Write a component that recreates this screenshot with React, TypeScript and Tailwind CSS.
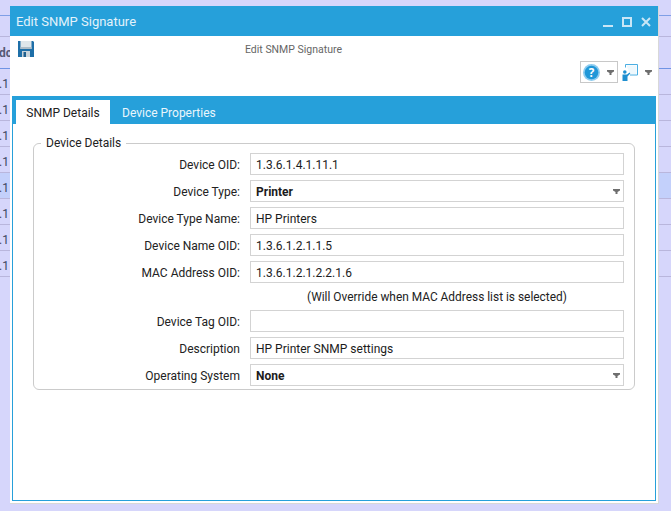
import React from 'react';

const font = 'font-[family-name:Roboto,sans-serif]';

const bgRows = [
  { h: 'h-[16px]', line: 'border-[#7f9fe6]' },
  { h: 'h-[21px]', line: 'border-[#b9b6dc]' },
  { h: 'h-[32px]', line: 'border-[#6f94e4]', text: 'dc', bold: true },
  { h: 'h-[26px]', line: 'border-[#b9b6dc]', text: '.1' },
  { h: 'h-[26px]', line: 'border-[#b9b6dc]', text: '.1' },
  { h: 'h-[26px]', line: 'border-[#b9b6dc]', text: '.1' },
  { h: 'h-[26px]', line: 'border-[#b9b6dc]', text: '.1' },
  { h: 'h-[26px]', line: 'border-[#b9b6dc]', text: '.1', active: true },
  { h: 'h-[26px]', line: 'border-[#b9b6dc]', text: '.1' },
  { h: 'h-[26px]', line: 'border-[#b9b6dc]', text: '.1' },
  { h: 'h-[26px]', line: 'border-[#b9b6dc]', text: '.1' },
];

const Caret = ({ className = '' }: { className?: string }) => (
  <svg width="7" height="5" viewBox="0 0 7 5" className={className}>
    <path d="M0 0h7v1.5L4.5 3v2h-2V3L0 1.5z" fill="#6e6e6e" />
  </svg>
);

const SaveIcon = () => (
  <svg width="16" height="16" viewBox="0 0 16 16">
    <path d="M0 0h15l1 1v15H0z" fill="#1e6fa8" />
    <rect x="2.5" y="0" width="11" height="8" fill="#dfe6ea" />
    <rect x="2.5" y="6" width="11" height="2" fill="#aebcc6" />
    <rect x="4" y="10" width="8" height="6" fill="#c8d3da" />
    <rect x="5.5" y="11" width="2.5" height="5" fill="#1e5f8e" />
  </svg>
);

const HelpIcon = () => (
  <svg width="17" height="17" viewBox="0 0 16 16">
    <circle cx="8" cy="8" r="8" fill="#8ccbef" />
    <circle cx="8" cy="8" r="6.4" fill="#1f97d8" />
    <text x="8" y="12" textAnchor="middle" fontSize="11" fontWeight="700" fill="#fff" fontFamily="Open Sans, sans-serif">?</text>
  </svg>
);

const BoardIcon = () => (
  <svg width="16" height="17" viewBox="0 0 16 17" fill="none">
    <path d="M3.5 3.5V.5h12v10.5H8" stroke="#4aaee2" strokeWidth="1" />
    <path d="M4.5 1.5h10v8.5H8z" fill="#eef8fd" />
    <circle cx="2.8" cy="8" r="1.8" fill="#1f8fd0" />
    <path d="M0.5 10.5h4.5l2.5-2 .8 1L5.5 12.5V17H.5z" fill="#1f8fd0" />
  </svg>
);

const Field = ({ label, value, bold, select }: { label: string; value?: string; bold?: boolean; select?: boolean }) => (
  <div className="flex items-center h-[22px]">
    <label className="w-[206px] pt-[1px] text-right text-[12px] text-[#222]">{label}</label>
    <div className={`ml-[10px] w-[374px] h-[22px] border border-[#d3d3d3] bg-white flex items-center justify-between pl-[5px] pr-[3px] text-[12px] text-[#1c1c1c] ${bold ? 'font-bold' : ''}`}>
      <span className="pt-[1px]">{value}</span>
      {select && <Caret />}
    </div>
  </div>
);

export default function App() {
  return (
    <div className={`relative w-[671px] h-[511px] overflow-hidden bg-[#d6d6fb] ${font}`}>
      {/* grid behind the dialog */}
      <div className="flex flex-col">
        {bgRows.map((row, i) => (
          <div
            key={i}
            className={`${row.h} border-b ${row.line} box-border flex items-center justify-start ${row.active ? 'bg-[#c3d0fb]' : ''} ${row.bold ? 'font-bold text-[#555a75]' : 'pt-[4px] text-[#3c4660]'} text-[12px]`}
          >
            {row.text && <span className="-ml-px">{row.text}</span>}
          </div>
        ))}
      </div>

      {/* dialog */}
      <div className="absolute left-[10px] top-[6px] w-[649px] h-[498px] bg-white flex flex-col border-r border-b border-[#d8d8d8]">
        <div className="h-[30px] bg-[#26a0da] flex items-center justify-between pl-[6px] pr-[7px] shrink-0">
          <span className="text-[13px] pt-[2px] text-[#e2f2fb]">Edit SNMP Signature</span>
          <div className="flex items-center gap-[9px] mt-[2px] text-[#c9e6f6]">
            <svg width="10" height="10" viewBox="0 0 10 10"><rect y="8" width="10" height="2" fill="currentColor" /></svg>
            <svg width="10" height="10" viewBox="0 0 10 10" fill="none"><rect x="1" y="1" width="8" height="8" stroke="currentColor" strokeWidth="2" /></svg>
            <svg width="10" height="10" viewBox="0 0 10 10" fill="none"><path d="M1 1l8 8M9 1l-8 8" stroke="currentColor" strokeWidth="2" /></svg>
          </div>
        </div>

        <div className="h-[60px] shrink-0 relative">
          <div className="absolute left-[8px] top-[5px]"><SaveIcon /></div>
          <div className="ml-[235px] text-[10.5px] text-[#666] pt-[6px]">Edit SNMP Signature</div>
          <div className="absolute left-[570px] top-[25px] flex items-center">
            <div className="w-[38px] h-[22px] border border-[#c8c8c8] flex items-center pl-[2px] gap-[7px]">
              <HelpIcon />
              <Caret />
            </div>
            <div className="ml-[4px]"><BoardIcon /></div>
            <Caret className="ml-[7px]" />
          </div>
        </div>

        <div className="flex-1 ml-[2px] mr-[2px] mb-[2px] border-x border-b border-[#26a0da] flex flex-col">
          <div className="h-[28px] -mx-px bg-[#26a0da] flex items-end pl-[4px] shrink-0">
            <div className="w-[94px] h-[24px] pt-[1px] bg-white flex items-center justify-center text-[12px] text-[#222]">SNMP Details</div>
            <div className="ml-[12px] h-[24px] pt-[1px] flex items-center text-[12px] text-[#eaf6fc]">Device Properties</div>
          </div>

          <fieldset className="mt-[12px] ml-[20px] w-[602px] h-[254px] border border-[#cbcbcb] rounded-[6px] box-border">
            <legend className="ml-[7px] px-[5px] text-[12px] text-[#222] leading-[14px]">Device Details</legend>
            <div className="flex flex-col gap-[5px] pt-[3px]">
              <Field label="Device OID:" value="1.3.6.1.4.1.11.1" />
              <Field label="Device Type:" value="Printer" bold select />
              <Field label="Device Type Name:" value="HP Printers" />
              <Field label="Device Name OID:" value="1.3.6.1.2.1.1.5" />
              <Field label="MAC Address OID:" value="1.3.6.1.2.1.2.2.1.6" />
              <div className="h-[22px] -mb-[5px] pb-[2px] flex items-center pl-[273px] text-[11.9px] text-[#222]">(Will Override when MAC Address list is selected)</div>
              <Field label="Device Tag OID:" />
              <Field label="Description" value="HP Printer SNMP settings" />
              <Field label="Operating System" value="None" bold select />
            </div>
          </fieldset>
        </div>
      </div>
    </div>
  );
}
